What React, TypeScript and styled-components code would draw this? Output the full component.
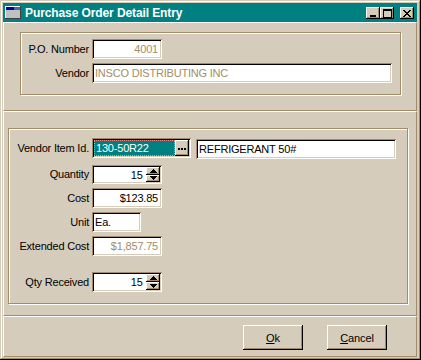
import React from "react";
import styled, { createGlobalStyle } from "styled-components";

const C = {
  face: "#D5CCBB",
  shadow: "#A28D68",
  hi: "#FFFFFF",
  dark: "#000000",
  title: "#008080",
  gray: "#A28D68",
};

const Global = createGlobalStyle`
  html, body { margin: 0; padding: 0; background: ${C.face}; }
  body { font-family: "Liberation Sans", Arial, sans-serif; font-size: 11px; color: #000; }
  * { box-sizing: border-box; }
`;

const raised = `
  box-shadow: inset -1px -1px 0 ${C.dark}, inset 1px 1px 0 ${C.hi},
    inset -2px -2px 0 ${C.shadow}, inset 2px 2px 0 ${C.face};
`;

const sunken = `
  box-shadow: inset 1px 1px 0 ${C.shadow}, inset -1px -1px 0 ${C.hi},
    inset 2px 2px 0 ${C.dark}, inset -2px -2px 0 ${C.face};
`;

const Window = styled.div`
  width: 421px;
  height: 360px;
  background: ${C.face};
  padding: 3px 4px 4px 3px;
  box-shadow: inset -1px -1px 0 ${C.dark}, inset 1px 1px 0 ${C.face},
    inset -2px -2px 0 ${C.shadow}, inset 2px 2px 0 ${C.hi};
  display: flex;
  flex-direction: column;
`;

const TitleBar = styled.div`
  height: 19px;
  background: ${C.title};
  display: flex;
  align-items: center;
  padding: 0 3px 0 2px;
  flex-shrink: 0;
`;

const TitleIcon = styled.svg`
  width: 16px;
  height: 13px;
  margin-right: 4px;
  flex-shrink: 0;
`;

const TitleText = styled.div`
  flex: 1;
  color: #fff;
  font-weight: bold;
  font-size: 12px;
  letter-spacing: -0.1px;
  white-space: nowrap;
`;

const CapButton = styled.div<{ $gap?: number }>`
  width: 14px;
  height: 12px;
  margin-left: ${(p) => p.$gap ?? 0}px;
  margin-top: 1px;
  background: ${C.face};
  ${raised}
  display: flex;
  align-items: center;
  justify-content: center;
  svg { display: block; }
`;

const Panel = styled.div<{ $pad: string; $end?: boolean }>`
  border-top: 1px solid ${C.hi};
  border-left: 1px solid ${C.hi};
  border-right: 1px solid ${C.shadow};
  border-bottom: 1px solid ${C.shadow};
  padding: ${(p) => p.$pad};
  display: flex;
  justify-content: ${(p) => (p.$end ? "flex-end" : "flex-start")};
  gap: 24px;
  flex-shrink: 0;
`;

const GroupBox = styled.div<{ $pt: number; $pb: number }>`
  flex: 1;
  border: 1px solid ${C.shadow};
  box-shadow: inset 1px 1px 0 ${C.hi}, 1px 1px 0 ${C.hi};
  padding: ${(p) => p.$pt}px 0 ${(p) => p.$pb}px 0;
  display: flex;
  flex-direction: column;
`;

const Row = styled.div<{ $mt?: number }>`
  display: flex;
  align-items: flex-start;
  margin-top: ${(p) => p.$mt ?? 0}px;
`;

const Label = styled.div<{ $w: number; $h?: number }>`
  width: ${(p) => p.$w}px;
  height: ${(p) => p.$h ?? 20}px;
  line-height: ${(p) => p.$h ?? 20}px;
  text-align: right;
  margin-right: 3px;
  letter-spacing: -0.2px;
  white-space: nowrap;
  flex-shrink: 0;
`;

const Field = styled.div<{
  $w: number;
  $h?: number;
  $right?: boolean;
  $disabled?: boolean;
  $mt?: number;
}>`
  width: ${(p) => p.$w}px;
  height: ${(p) => p.$h ?? 20}px;
  margin-top: ${(p) => p.$mt ?? 0}px;
  background: #fff;
  ${sunken}
  padding: 2px ${(p) => (p.$right ? 4 : 2)}px 2px 3px;
  display: flex;
  align-items: center;
  justify-content: ${(p) => (p.$right ? "flex-end" : "flex-start")};
  color: ${(p) => (p.$disabled ? C.gray : "#000")};
  letter-spacing: -0.2px;
  white-space: nowrap;
  flex-shrink: 0;
`;

const ComboField = styled.div<{ $w: number; $h?: number }>`
  width: ${(p) => p.$w}px;
  height: ${(p) => p.$h ?? 20}px;
  background: #fff;
  ${sunken}
  padding: 2px;
  display: flex;
  align-items: stretch;
  flex-shrink: 0;
`;

const Selected = styled.div`
  flex: 1;
  background: ${C.title};
  color: #fff;
  border: 1px dotted #ff8c8c;
  padding-left: 1px;
  display: flex;
  align-items: center;
  letter-spacing: -0.2px;
`;

const EllipsisBtn = styled.div`
  width: 14px;
  background: ${C.face};
  ${raised}
  display: flex;
  align-items: center;
  justify-content: center;
  gap: 1px;
  padding-top: 2px;
`;

const Dot = styled.span`
  width: 2px;
  height: 2px;
  background: #000;
`;

const SpinText = styled.div`
  flex: 1;
  display: flex;
  align-items: center;
  justify-content: flex-end;
  padding-right: 3px;
`;

const SpinCol = styled.div`
  width: 14px;
  display: flex;
  flex-direction: column;
`;

const SpinBtn = styled.div`
  flex: 1;
  background: ${C.face};
  ${raised}
  display: flex;
  align-items: center;
  justify-content: center;
  svg { display: block; }
`;

const Button = styled.div`
  width: 60px;
  height: 25px;
  background: ${C.face};
  ${raised}
  display: flex;
  align-items: center;
  justify-content: center;
  letter-spacing: -0.1px;
  u { text-decoration: underline; text-underline-offset: 1px; }
`;

const Up = () => (
  <svg width="7" height="4" viewBox="0 0 7 4" shapeRendering="crispEdges">
    <polygon points="3.5,0 7,4 0,4" fill="#000" />
  </svg>
);
const Down = () => (
  <svg width="7" height="4" viewBox="0 0 7 4" shapeRendering="crispEdges">
    <polygon points="0,0 7,0 3.5,4" fill="#000" />
  </svg>
);

const Spin: React.FC<{ value: string; h?: number }> = ({ value, h }) => (
  <ComboField $w={70} $h={h}>
    <SpinText>{value}</SpinText>
    <SpinCol>
      <SpinBtn>
        <Up />
      </SpinBtn>
      <SpinBtn>
        <Down />
      </SpinBtn>
    </SpinCol>
  </ComboField>
);

export default function App() {
  return (
    <>
      <Global />
      <Window>
        <TitleBar>
          <TitleIcon viewBox="0 0 16 13" shapeRendering="crispEdges">
            <rect x="0" y="0" width="16" height="13" fill="#404040" />
            <rect x="0" y="0" width="15" height="12" fill="#ffffff" />
            <rect x="1" y="1" width="14" height="11" fill="#c0c0c0" />
            <rect x="1" y="1" width="14" height="3" fill="#0000a8" />
            <rect x="9" y="1" width="6" height="3" fill="#3a6ea5" />
          </TitleIcon>
          <TitleText>Purchase Order Detail Entry</TitleText>
          <CapButton>
            <svg width="8" height="8" viewBox="0 0 8 8" shapeRendering="crispEdges">
              <rect x="1" y="6" width="6" height="2" fill="#000" />
            </svg>
          </CapButton>
          <CapButton>
            <svg width="9" height="9" viewBox="0 0 9 9" shapeRendering="crispEdges">
              <rect x="0" y="0" width="9" height="9" fill="#000" />
              <rect x="1" y="2" width="7" height="6" fill={C.face} />
            </svg>
          </CapButton>
          <CapButton $gap={6}>
            <svg width="8" height="7" viewBox="0 0 8 7" shapeRendering="crispEdges">
              <path
                d="M0 0h2v1h1v1h2v-1h1v-1h2v1h-1v1h-1v1h-1v1h1v1h1v1h1v1h-2v-1h-1v-1h-2v1h-1v1h-2v-1h1v-1h1v-1h1v-1h-1v-1h-1v-1h-1z"
                fill="#000"
              />
            </svg>
          </CapButton>
        </TitleBar>

        <Panel $pad="9px 15px 15px 16px">
          <GroupBox $pt={6} $pb={11}>
            <Row>
              <Label $w={68}>P.O. Number</Label>
              <Field $w={70} $right $disabled>
                4001
              </Field>
            </Row>
            <Row $mt={4}>
              <Label $w={68}>Vendor</Label>
              <Field $w={300} $disabled>
                INSCO DISTRIBUTING INC
              </Field>
            </Row>
          </GroupBox>
        </Panel>

        <Panel $pad="16px 8px 11px 4px">
          <GroupBox $pt={9} $pb={11}>
            <Row>
              <Label $w={80}>Vendor Item Id.</Label>
              <ComboField $w={99}>
                <Selected>130-50R22</Selected>
                <EllipsisBtn>
                  <Dot />
                  <Dot />
                  <Dot />
                </EllipsisBtn>
              </ComboField>
              <Field $w={200} $mt={1} style={{ marginLeft: 5 }}>
                REFRIGERANT 50#
              </Field>
            </Row>
            <Row $mt={6}>
              <Label $w={80} $h={19}>
                Quantity
              </Label>
              <Spin value="15" h={19} />
            </Row>
            <Row $mt={4}>
              <Label $w={80}>Cost</Label>
              <Field $w={70} $right>
                $123.85
              </Field>
            </Row>
            <Row $mt={4}>
              <Label $w={80}>Unit</Label>
              <Field $w={49}>Ea.</Field>
            </Row>
            <Row $mt={4}>
              <Label $w={80}>Extended Cost</Label>
              <Field $w={70} $right $disabled>
                $1,857.75
              </Field>
            </Row>
            <Row $mt={16}>
              <Label $w={80}>Qty Received</Label>
              <Spin value="15" />
            </Row>
          </GroupBox>
        </Panel>

        <Panel $pad="8px 29px 6px 0" $end>
          <Button>
            <span>
              <u>O</u>k
            </span>
          </Button>
          <Button>
            <span>
              <u>C</u>ancel
            </span>
          </Button>
        </Panel>
      </Window>
    </>
  );
}
